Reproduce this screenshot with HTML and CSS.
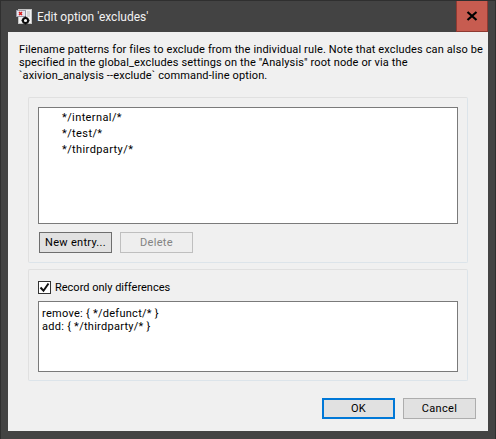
FILE: index.html
```html
<!DOCTYPE html>
<html lang="en">

<head>
    <meta charset="UTF-8">
    <title>Edit option 'excludes'</title>
    <link rel="stylesheet" href="styles.css">
</head>

<body>
    <div class="window">
        <div class="title-bar">
            <svg class="app-icon" width="16" height="16" viewBox="0 0 16 16">
                <rect x="2.5" y="0.5" width="13" height="14" fill="#f2f2f2" stroke="#c4c4c4"/>
                <rect x="0.5" y="1.5" width="9" height="6" fill="#e6e6f0" stroke="#9a9aa8"/>
                <path d="M3 3l3 3M6 3l-3 3" stroke="#d81818" stroke-width="1.5"/>
                <path d="M11 3h3M11 5h3M11 7h3" stroke="#bdbdbd"/>
                <circle cx="9.5" cy="11.5" r="2.6" fill="#f2f2f2" stroke="#0c0c0c" stroke-width="2"/>
                <path d="M9.5 7.5v2M9.5 13.5v2M5.5 11.5h2M11.5 11.5h2" stroke="#0c0c0c" stroke-width="1.5"/>
            </svg>
            <span class="title">Edit option 'excludes'</span>
            <div class="close-btn">
                <svg width="12" height="10" viewBox="0 0 12 10">
                    <path d="M1.5 1l9 8M10.5 1l-9 8" stroke="#000" stroke-width="2.2"/>
                </svg>
            </div>
        </div>

        <div class="dialog">
            <p class="description">Filename patterns for files to exclude from the individual rule. Note that excludes can also be<br>specified in the global_excludes settings on the "Analysis" root node or via the<br>`axivion_analysis --exclude` command-line option.</p>

            <div class="group entries-group">
                <div class="list-box">
                    <div class="list-item">*/internal/*</div>
                    <div class="list-item">*/test/*</div>
                    <div class="list-item">*/thirdparty/*</div>
                </div>
                <div class="entry-buttons">
                    <button class="btn btn-hover">New entry...</button>
                    <button class="btn btn-disabled">Delete</button>
                </div>
            </div>

            <div class="group diff-group">
                <label class="check-row">
                    <span class="check-box">
                        <svg width="11" height="11" viewBox="0 0 11 11">
                            <path d="M1.5 5.5l3 3.2 5-7.2" fill="none" stroke="#111" stroke-width="2"/>
                        </svg>
                    </span>
                    Record only differences
                </label>
                <div class="diff-box">remove: { */defunct/* }<br>add: { */thirdparty/* }</div>
            </div>

            <div class="dialog-buttons">
                <button class="btn btn-default">OK</button>
                <button class="btn">Cancel</button>
            </div>
        </div>
    </div>
</body>

</html>
```

FILE: styles.css
```css
* {
    margin: 0;
    padding: 0;
    box-sizing: border-box;
}

body {
    width: 496px;
    height: 439px;
    overflow: hidden;
    background-color: #434343;
    font-family: Roboto, "Open Sans", sans-serif;
    font-size: 11px;
    color: #000;
}

.window {
    height: 439px;
    padding: 0 7px 8px;
    border: 1px solid #2f2f2f;
    border-bottom: none;
    display: flex;
    flex-direction: column;
}

.title-bar {
    height: 31px;
    display: flex;
    align-items: center;
    flex-shrink: 0;
}

.app-icon {
    margin: 0 5px 0 8px;
}

.title {
    flex-grow: 1;
    font-size: 12px;
    color: #f2f2f2;
}

.close-btn {
    width: 32px;
    height: 31px;
    background-color: #c75c50;
    border: 1px solid #8f3a32;
    border-top: none;
    display: flex;
    align-items: center;
    justify-content: center;
}

.dialog {
    flex-grow: 1;
    background-color: #f0f0f0;
    padding: 11px 20px 12px 11px;
    display: flex;
    flex-direction: column;
}

.description {
    line-height: 13px;
    height: 42px;
    margin-bottom: 12px;
    white-space: nowrap;
    letter-spacing: 0.13px;
}

.group {
    background-color: #f0f0f0;
    border: 1px solid #e0e0e0;
    border-right-color: #dce4ea;
    border-bottom-color: #dce4ea;
    border-radius: 2px;
    margin-left: 9px;
    padding: 9px;
}

.entries-group {
    height: 166px;
}

.diff-group {
    height: 112px;
    margin-top: 6px;
}

.list-box {
    height: 117px;
    background-color: #fff;
    border: 1px solid #7a7a7a;
    padding: 2px 0 0 23px;
}

.list-item {
    height: 16px;
    line-height: 16px;
    letter-spacing: 0.4px;
}

.entry-buttons {
    display: flex;
    gap: 8px;
    margin-top: 8px;
    padding-left: 1px;
}

.btn {
    width: 73px;
    height: 21px;
    background-color: #e1e1e1;
    border: 1px solid #adadad;
    font-family: inherit;
    font-size: 11px;
    letter-spacing: 0.3px;
    color: #000;
}

.btn-hover {
    background-color: #e1e1e1;
    border-color: #6e6e6e;
}

.btn-disabled {
    background-color: #eeeeee;
    border-color: #bfbfbf;
    color: #838383;
}

.btn-default {
    border: 2px solid #0078d7;
}

.check-row {
    display: flex;
    align-items: center;
    gap: 4px;
    height: 14px;
    margin-top: 1px;
}

.check-box {
    width: 13px;
    height: 13px;
    background-color: #fff;
    border: 1px solid #333;
    display: flex;
    align-items: center;
    justify-content: center;
}

.diff-box {
    height: 71px;
    margin-top: 7px;
    background-color: #fff;
    border: 1px solid #7a7a7a;
    padding: 5px 0 0 3px;
    line-height: 13px;
    letter-spacing: 0.27px;
}

.dialog-buttons {
    display: flex;
    justify-content: flex-end;
    gap: 8px;
    margin-top: auto;
    margin-right: -8px;
}
```
